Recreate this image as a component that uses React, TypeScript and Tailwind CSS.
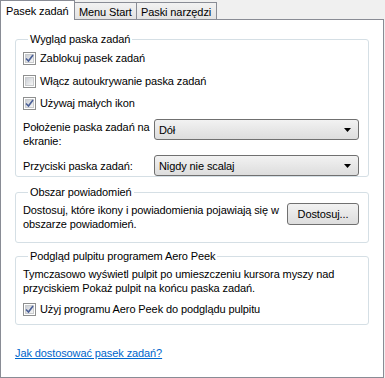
import { ReactNode } from "react";

const CheckBox = ({ checked }: { checked?: boolean }) => (
  <span className="relative flex h-[13px] w-[13px] shrink-0 items-center justify-center border border-[#8e8f8f] bg-white">
    <span className="flex h-[9px] w-[9px] items-center justify-center border border-[#c9cbcd] bg-gradient-to-br from-[#cbcfd5] to-[#f6f6f6]">
      {checked && (
        <svg width="9" height="9" viewBox="0 0 9 9" className="overflow-visible">
          <path
            d="M1 4.5 L3.5 7 L8 1"
            fill="none"
            stroke="#4a5f97"
            strokeWidth="1.6"
          />
        </svg>
      )}
    </span>
  </span>
);

const CheckRow = ({
  label,
  checked,
  className = "",
}: {
  label: string;
  checked?: boolean;
  className?: string;
}) => (
  <div className={`flex h-[16px] items-center gap-[4px] ${className}`}>
    <CheckBox checked={checked} />
    <span>{label}</span>
  </div>
);

const Select = ({ value, className = "" }: { value: string; className?: string }) => (
  <div
    className={`flex h-[21px] w-[205px] shrink-0 items-center justify-between rounded-[3px] border border-[#707070] bg-gradient-to-b from-[#f2f2f2] to-[#dddddd] pl-[4px] pr-[7px] ${className}`}
  >
    <span>{value}</span>
    <svg width="7" height="4" viewBox="0 0 7 4">
      <path d="M0 0 H7 L3.5 4 Z" fill="#000" />
    </svg>
  </div>
);

const Group = ({
  title,
  className = "",
  children,
}: {
  title: string;
  className?: string;
  children: ReactNode;
}) => (
  <fieldset
    className={`mx-[14px] rounded-[3px] border border-[#d5dfe5] pl-[7px] pr-[9px] ${className}`}
  >
    <legend className="ml-[5px] px-[2px] leading-[16px]">{title}</legend>
    {children}
  </fieldset>
);

export default function App() {
  return (
    <div className="h-[378px] w-[385px] whitespace-nowrap bg-[#f0f0f0] text-[11px] leading-[14px] tracking-[-0.1px] text-black [font-family:'Liberation_Sans',Arial,sans-serif]">
      <div className="flex h-[19px] items-end">
        <div className="relative z-10 -mb-px flex h-[20px] w-[75px] items-start border-l border-r border-t border-[#898c95] bg-white pl-[5px] pt-[3px]">
          Pasek zadań
        </div>
        <div className="flex h-[17px] w-[62px] items-center border border-b-0 border-l-0 border-[#898c95] bg-gradient-to-b from-[#f2f2f2] to-[#e3e3e3] pl-[4px] pt-[1px]">
          Menu Start
        </div>
        <div className="flex h-[17px] w-[80px] items-center border border-b-0 border-l-0 border-[#898c95] bg-gradient-to-b from-[#f2f2f2] to-[#e3e3e3] pl-[4px] pt-[1px]">
          Paski narzędzi
        </div>
      </div>
      <div className="flex h-[359px] w-[384px] flex-col border border-[#898c95] bg-white">
        <Group title="Wygląd paska zadań" className="mt-[11px] h-[146px]">
          <CheckRow label="Zablokuj pasek zadań" checked className="mt-[3px]" />
          <CheckRow label="Włącz autoukrywanie paska zadań" className="mt-[7px]" />
          <CheckRow label="Używaj małych ikon" checked className="mt-[6px]" />
          <div className="mt-[8px] flex items-start justify-between">
            <div className="pt-[1px]">
              Położenie paska zadań na
              <br />
              ekranie:
            </div>
            <Select value="Dół" />
          </div>
          <div className="mt-[7px] flex items-center justify-between">
            <div>Przyciski paska zadań:</div>
            <Select value="Nigdy nie scalaj" />
          </div>
        </Group>
        <Group title="Obszar powiadomień" className="mt-[7px] h-[59px]">
          <div className="flex items-start justify-between">
            <div className="mt-[3px]">
              Dostosuj, które ikony i powiadomienia pojawiają się w
              <br />
              obszarze powiadomień.
            </div>
            <div className="mt-[3px] flex h-[22px] w-[72px] shrink-0 items-center justify-center rounded-[3px] border border-[#707070] bg-gradient-to-b from-[#f2f2f2] to-[#dddddd]">
              Dostosuj...
            </div>
          </div>
        </Group>
        <Group title="Podgląd pulpitu programem Aero Peek" className="mt-[5px] h-[77px]">
          <div className="mt-[3px]">
            Tymczasowo wyświetl pulpit po umieszczeniu kursora myszy nad
            <br />
            przyciskiem Pokaż pulpit na końcu paska zadań.
          </div>
          <CheckRow
            label="Użyj programu Aero Peek do podglądu pulpitu"
            checked
            className="mt-[6px]"
          />
        </Group>
        <a className="ml-[14px] mt-[21px] w-fit text-[#0066cc] underline">
          Jak dostosować pasek zadań?
        </a>
      </div>
    </div>
  );
}
